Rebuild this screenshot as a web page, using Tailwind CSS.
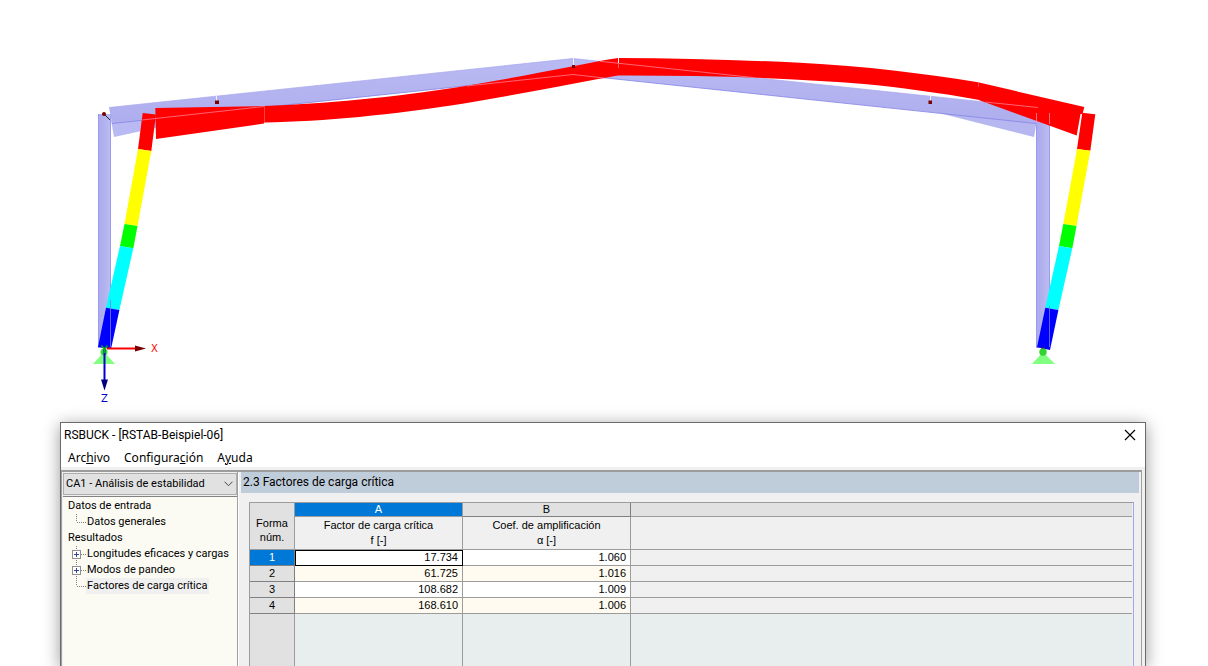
<!DOCTYPE html>
<html lang="es">
<head>
  <meta charset="UTF-8" />
  <meta name="viewport" content="width=device-width, initial-scale=1.0" />
  <title>RSBUCK - [RSTAB-Beispiel-06]</title>
  <script src="https://cdn.jsdelivr.net/npm/@tailwindcss/browser@4"></script>
</head>
<body class="bg-white text-black h-screen flex flex-col overflow-hidden">

  <!-- Frame model with buckling shape -->
  <svg class="block w-full shrink-0" viewBox="0 0 1208 422" role="img" aria-label="Modo de pandeo del pórtico">
    <defs>
      <linearGradient id="col" x1="0" x2="1" y1="0" y2="0">
        <stop offset="0" stop-color="#a9a9ee" />
        <stop offset="0.5" stop-color="#b2b2ee" />
        <stop offset="1" stop-color="#bebef4" />
      </linearGradient>
      <linearGradient id="beam" x1="0" x2="0" y1="0" y2="1">
        <stop offset="0" stop-color="#b9b9f3" />
        <stop offset="1" stop-color="#aeaeee" />
      </linearGradient>
    </defs>

    <!-- undeformed system -->
    <rect x="98" y="114" width="13" height="234" fill="url(#col)" />
    <path d="M98.500 114V348M110.500 114V348" stroke="#9a9aee" />
    <rect x="1036" y="108" width="14" height="240" fill="url(#col)" />
    <path d="M1036.500 114V348M1049.500 114V348" stroke="#9a9aee" />
    <path d="M111 120L114 137L217 114.500V108Z" fill="#b9b9f3" />
    <path d="M1037 120L1034 137L931 111V108Z" fill="#b6b6f1" />
    <path d="M109 107.500L573 58.500V74.500L112 123.500Z" fill="url(#beam)" />
    <path d="M1037 107.500L573 58.500V74.500L1036 123.500Z" fill="url(#beam)" />
    <path d="M109 107.500L573 58.500L1037 107.500" fill="none" stroke="#a6a6ee" stroke-width="0.7" />
    <path d="M112 123.500L573 74.500L1036 123.500" fill="none" stroke="#8484e6" stroke-width="0.8" />
    <path d="M216.500 94V102M930.500 94V102M573.500 58V66" stroke="#eeeeff" />

    <!-- left column -->
    <path d="M142.700 113L156 114.500L151.300 151L138 149Z" fill="#f00" />
    <path d="M138 149L151.300 151L137.500 226L124.500 224Z" fill="#ff0" />
    <path d="M124.500 224L137.500 226L133.300 248.300L120 246Z" fill="#0f0" />
    <path d="M120 246L133.300 248.300L119.400 310L106 307.700Z" fill="#0ff" />
    <path d="M106 307.700L119.400 310L111 349L98 347Z" fill="#00f" />

    <!-- right column -->
    <path d="M1082.300 112.700L1095.300 114.300L1090.300 150.700L1077 149Z" fill="#f00" />
    <path d="M1077 149L1090.300 150.700L1076.500 226L1063.300 224Z" fill="#ff0" />
    <path d="M1063.300 224L1076.500 226L1072.300 248.300L1059 246Z" fill="#0f0" />
    <path d="M1059 246L1072.300 248.300L1058.400 310L1045.300 307.700Z" fill="#0ff" />
    <path d="M1045.300 307.700L1058.400 310L1050 350L1037 347.300Z" fill="#00f" />

    <!-- rafters -->
    <path d="M155.300 108L264 106V123.500L156 139Z" fill="#f00" />
    <path d="M264 106C325 103.500 390 98 467 85.700C503 79.700 540 72.700 573 66.300L605 60L618 58V75.500C603 78 588 81 573 83.700C540 90 503 97 467 103C390 115 325 121.500 264 122.500Z" fill="#f00" />
    <path d="M618 58C680 58 740 60 800 62.700C865 66 925 73.500 978 82.300L1084.300 107L1082.500 114H1080.500L1076.700 135.500L978 99.700C940 93 900 87.500 867 84.300C790 77.500 700 75.300 618 75.500Z" fill="#f00" />

    <!-- member axes showing through -->
    <path d="M142 120L264 106.500M467 86L573 74.500L604 78M600 61.300L755 77.700M985 102L1038 107.500" fill="none" stroke="#ff7c92" stroke-width="0.8" />
    <path d="M264.500 106V123M978.500 82V87" stroke="#ff7070" stroke-width="0.6" />
    <path d="M618.500 58V63" stroke="#fff" />
    <path d="M618.500 63V68" stroke="#ff6060" />
    <path d="M1036.500 113V123M1049.500 113V124" stroke="#ff8aa0" stroke-width="0.8" />
    <path d="M110.500 300V347M1049.500 306V347" stroke="#7878ff" stroke-width="0.8" />

    <!-- nodes -->
    <path d="M104 114L110 120" stroke="#222" />
    <g fill="#780000">
      <circle cx="104" cy="114" r="2" />
      <rect x="215" y="100.500" width="4" height="3.500" />
      <rect x="928.500" y="100.500" width="3.500" height="3.500" />
      <rect x="572" y="65" width="3" height="3" />
    </g>

    <!-- supports -->
    <path d="M104 352L115 364H93Z" fill="#80ff80" />
    <circle cx="104" cy="352" r="3.500" fill="#3cdc3c" />
    <path d="M1043 352L1055 364H1032Z" fill="#80ff80" />
    <circle cx="1043" cy="352" r="3.700" fill="#32d232" />
    <path d="M1041 348H1045" stroke="#333" />

    <!-- axes -->
    <path d="M107 348.500H137" stroke="#f00" stroke-width="2" />
    <path d="M135 345.500L146 348.500L135 351.500Z" fill="#780000" />
    <path d="M104.500 349V381" stroke="#0000d0" stroke-width="2" />
    <path d="M101 379.500H108L104.500 390.500Z" fill="#000080" />
    <path d="M101.500 345.500L104.500 349L107.500 345.500M104.500 349V353" fill="none" stroke="#00b400" stroke-width="1.300" />
    <text x="151" y="352" fill="#f00" class="font-['DejaVu_Sans'] text-[10px]">X</text>
    <text x="101" y="402" fill="#00c" class="font-['DejaVu_Sans'] text-[10px]">Z</text>
  </svg>

  <section class="flex-1 min-h-0 flex flex-col ml-[60px] mr-[62px] border-t border-x border-[#6b6b6b] bg-[#f0f0f0] shadow-[0_3px_16px_rgba(0,0,0,0.4)] font-['Roboto',sans-serif] text-[12px]">
    <header class="bg-white shrink-0">
      <div class="flex items-center justify-between h-6 pl-[3px] pr-[9px]">
        <h1>RSBUCK - [RSTAB-Beispiel-06]</h1>
        <button type="button" aria-label="Cerrar">
          <svg class="block w-3 h-3" viewBox="0 0 12 12" fill="none" stroke="#000" stroke-width="1.200"><path d="M1 1L11 11M11 1L1 11" /></svg>
        </button>
      </div>
      <nav class="flex items-end gap-[14px] h-5 pl-[7px] font-['Noto_Sans',sans-serif]">
        <button type="button" class="leading-[18px]">Arc<u>h</u>ivo</button>
        <button type="button" class="leading-[18px]">Configura<u>c</u>ión</button>
        <button type="button" class="leading-[18px]">A<u>y</u>uda</button>
      </nav>
    </header>

    <div class="flex-1 min-h-0 flex mt-[3px] mr-[3px] border-t-2 border-[#9c9c9c]">
      <!-- navigator -->
      <aside class="w-[177px] shrink-0 flex flex-col border-l border-r border-[#a0a0a0] text-[12px]">
        <div class="relative ml-px mt-px h-[22px] shrink-0">
          <select aria-label="Caso" class="appearance-none w-full h-full border border-[#adadad] bg-[#e1e1e1] pl-[2px] pr-5 text-[11px]">
            <option>CA1 - Análisis de estabilidad</option>
          </select>
          <svg class="absolute right-1 top-2 w-[9px] h-[6px] pointer-events-none" viewBox="0 0 9 6" fill="none" stroke="#444"><path d="M0.500 0.700L4.500 4.700L8.500 0.700" /></svg>
        </div>
        <ul class="flex-1 ml-px mt-px border-t border-[#828282] bg-[#fbfbf3] pl-[5px] pt-px leading-4 whitespace-nowrap text-[11px]">
          <li>Datos de entrada
            <ul>
              <li class="flex items-center">
                <svg class="w-[17px] h-4 ml-px" viewBox="0 0 17 16" stroke="#808080" stroke-dasharray="1 1"><path d="M7.500 0V8M8 8.500H17" /></svg>
                <span class="px-px">Datos generales</span>
              </li>
            </ul>
          </li>
          <li>Resultados
            <ul>
              <li class="flex items-center">
                <svg class="w-[17px] h-4 ml-px" viewBox="0 0 17 16" fill="none" stroke="#808080"><path d="M7.500 0V16M12 8.500H17" stroke-dasharray="1 1" /><rect x="3.500" y="4.500" width="8" height="8" fill="#fff" stroke="#919191" /><path d="M5 8.500H10M7.500 6V11" stroke="#2b4a9b" /></svg>
                <span class="px-px">Longitudes eficaces y cargas</span>
              </li>
              <li class="flex items-center">
                <svg class="w-[17px] h-4 ml-px" viewBox="0 0 17 16" fill="none" stroke="#808080"><path d="M7.500 0V16M12 8.500H17" stroke-dasharray="1 1" /><rect x="3.500" y="4.500" width="8" height="8" fill="#fff" stroke="#919191" /><path d="M5 8.500H10M7.500 6V11" stroke="#2b4a9b" /></svg>
                <span class="px-px">Modos de pandeo</span>
              </li>
              <li class="flex items-center">
                <svg class="w-[17px] h-4 ml-px" viewBox="0 0 17 16" stroke="#808080" stroke-dasharray="1 1"><path d="M7.500 0V8M8 8.500H17" /></svg>
                <span class="px-px bg-[#f0f0f0]">Factores de carga crítica</span>
              </li>
            </ul>
          </li>
        </ul>
      </aside>

      <!-- results -->
      <main class="flex-1 min-w-0 flex flex-col border-l border-l-white border-r border-r-[#a0a0a0] pl-[2px] pr-[2px]">
        <h2 class="bg-[#bfccda] h-[21px] leading-[21px] pl-[2px] shrink-0">2.3 Factores de carga crítica</h2>
        <div class="flex-1 min-h-0 mt-[9px] ml-2 mr-[5px] border-t border-l border-[#9c9c9c] border-r border-r-[#a6a6e6] pr-px">
          <table class="w-full h-full table-fixed border-separate border-spacing-0 font-['Liberation_Sans',sans-serif] text-[11px] leading-[15px]">
            <colgroup>
              <col class="w-[45px]" />
              <col class="w-[168px]" />
              <col class="w-[168px]" />
              <col />
            </colgroup>
            <thead>
              <tr class="h-[14px] leading-[13px]">
                <th rowspan="2" class="bg-[#e1e1e1] border-r border-b border-[#9c9c9c] font-normal align-middle leading-[14px] pt-2">Forma<br />núm.</th>
                <th class="bg-[#0078d7] text-white border-r border-b border-[#9c9c9c] font-normal">A</th>
                <th class="bg-[#e1e1e1] border-r border-b border-[#808080] font-normal">B</th>
                <th class="bg-[#e1e1e1] border-b border-[#9c9c9c]"></th>
              </tr>
              <tr class="h-[33px] leading-[15px]">
                <th class="border-r border-b border-[#9c9c9c] font-normal">Factor de carga crítica<br />f [-]</th>
                <th class="border-r border-b border-[#9c9c9c] font-normal">Coef. de amplificación<br />α [-]</th>
                <th class="border-b border-[#9c9c9c]"></th>
              </tr>
            </thead>
            <tbody class="text-right">
              <tr class="h-4">
                <th class="bg-[#0078d7] text-white border-r border-b border-[#808080] font-normal text-center">1</th>
                <td class="bg-white border-r border-b border-[#9c9c9c] outline outline-black -outline-offset-1 pr-1">17.734</td>
                <td class="bg-white border-r border-b border-[#9c9c9c] pr-1">1.060</td>
                <td class="border-b border-[#9c9c9c]"></td>
              </tr>
              <tr class="h-4">
                <th class="bg-[#e1e1e1] border-r border-b border-[#808080] font-normal text-center">2</th>
                <td class="bg-[#fffbf0] border-r border-b border-[#9c9c9c] pr-1">61.725</td>
                <td class="bg-[#fffbf0] border-r border-b border-[#9c9c9c] pr-1">1.016</td>
                <td class="border-b border-[#9c9c9c]"></td>
              </tr>
              <tr class="h-4">
                <th class="bg-[#e1e1e1] border-r border-b border-[#808080] font-normal text-center">3</th>
                <td class="bg-white border-r border-b border-[#9c9c9c] pr-1">108.682</td>
                <td class="bg-white border-r border-b border-[#9c9c9c] pr-1">1.009</td>
                <td class="border-b border-[#9c9c9c]"></td>
              </tr>
              <tr class="h-4">
                <th class="bg-[#e1e1e1] border-r border-b border-[#808080] font-normal text-center">4</th>
                <td class="bg-[#fffbf0] border-r border-b border-[#9c9c9c] pr-1">168.610</td>
                <td class="bg-[#fffbf0] border-r border-b border-[#9c9c9c] pr-1">1.006</td>
                <td class="border-b border-[#9c9c9c]"></td>
              </tr>
              <tr>
                <td class="bg-[#e1e1e1] border-r border-[#9c9c9c]"></td>
                <td class="bg-[#e8eded] border-r border-[#9c9c9c]"></td>
                <td class="bg-[#e8eded] border-r border-[#9c9c9c]"></td>
                <td class="bg-[#e8eded]"></td>
              </tr>
            </tbody>
          </table>
        </div>
      </main>
    </div>
  </section>

</body>
</html>
